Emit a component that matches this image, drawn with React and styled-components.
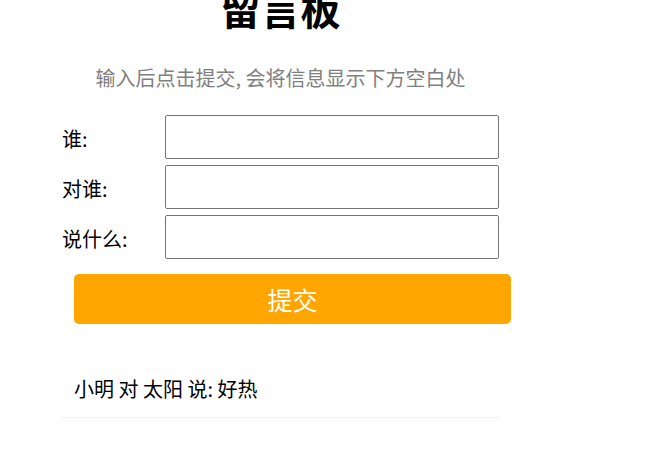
import styled, { createGlobalStyle } from 'styled-components';

const GlobalStyle = createGlobalStyle`
	body {
		margin: 0;
		font-family: "Noto Sans CJK SC", "Noto Sans", sans-serif;
		color: #000;
		background: #fff;
	}
`;

const Board = styled.div`
	display: flex;
	flex-direction: column;
	width: 437px;
	margin-left: 62px;
`;

const Title = styled.h1`
	margin: -20px 0 0;
	font-size: 40px;
	line-height: 56px;
	font-weight: 700;
	text-align: center;
`;

const Hint = styled.p`
	margin: 28px 0 23px;
	font-size: 20px;
	line-height: 28px;
	color: #808080;
	text-align: center;
`;

const Form = styled.form`
	display: grid;
	grid-template-columns: 103px 334px;
	row-gap: 6px;
	align-items: center;
`;

const Label = styled.label`
	font-size: 20px;
	padding-top: 3px;
`;

const Input = styled.input`
	box-sizing: border-box;
	height: 44px;
	width: 100%;
	margin: 0;
	border: 1px solid #767676;
	border-radius: 2px;
	font-size: 18px;
`;

const Submit = styled.button`
	grid-column: 1 / -1;
	margin: 9px 0 0 12px;
	width: 437px;
	height: 50px;
	border: none;
	border-radius: 5px;
	background: #ffa500;
	color: #fff;
	font-family: inherit;
	font-size: 25px;
`;

const Messages = styled.ul`
	list-style: none;
	margin: 43px 0 0;
	padding: 0;
`;

const Message = styled.li`
	padding: 0 0 6px 12px;
	font-size: 20px;
	line-height: 44px;
	border-bottom: 1px solid #eee;
`;

const fields = [
	{ id: 'who', label: '谁:' },
	{ id: 'to', label: '对谁:' },
	{ id: 'say', label: '说什么:' },
];

const App = () => {
	return (
		<>
			<GlobalStyle />
			<Board>
				<Title>留言板</Title>
				<Hint>输入后点击提交, 会将信息显示下方空白处</Hint>
				<Form onSubmit={(e) => e.preventDefault()}>
					{fields.map((f) => [
						<Label key={f.id + '-label'} htmlFor={f.id}>
							{f.label}
						</Label>,
						<Input key={f.id} id={f.id} type='text' />,
					])}
					<Submit type='submit'>提交</Submit>
				</Form>
				<Messages>
					<Message>小明 对 太阳 说: 好热</Message>
				</Messages>
			</Board>
		</>
	);
};

export default App;
